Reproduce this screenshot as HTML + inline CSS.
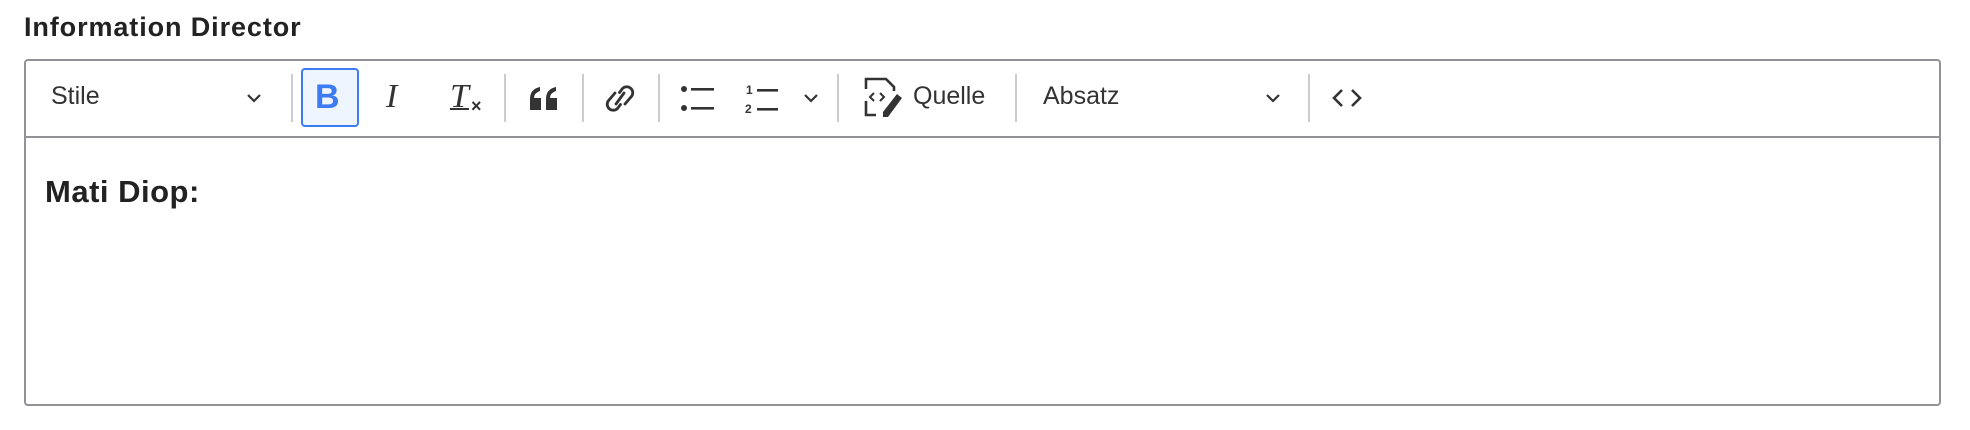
<!DOCTYPE html>
<html><head><style>
body{margin:0;width:1970px;height:430px;background:#fff;font-family:"Liberation Sans",Arial,sans-serif;color:#222;position:relative;overflow:hidden}
.a{position:absolute}
.lbl{left:24px;top:12px;font-size:27px;font-weight:bold;color:#222;letter-spacing:0.9px}
.box{left:24px;top:59px;width:1917px;height:347px;border:2px solid #919196;border-radius:4px;box-sizing:border-box}
.tb{left:24px;top:136px;width:1917px;height:2px;background:#919196}
.sep{width:2px;height:48px;top:74px;background:#ccc}
.t{font-size:25px;color:#333;top:82px;line-height:28px}
svg{position:absolute}
</style></head><body>
<div class="a lbl">Information Director</div>
<div class="a box"></div>
<div class="a tb"></div>
<div class="a t" style="left:51px">Stile</div>
<svg style="left:246px;top:92px" width="16" height="12"><path d="M2 3l6 6 6-6" fill="none" stroke="#333" stroke-width="2.2"/></svg>
<div class="a sep" style="left:291px"></div>
<div class="a" style="left:301px;top:68px;width:58px;height:59px;box-sizing:border-box;border:2px solid #3d7bf3;border-radius:4px;background:#eff5ff"></div>
<div class="a" style="left:315px;top:79px;font-size:34px;font-weight:bold;color:#3d7bf3;line-height:36px">B</div>
<div class="a" style="left:386px;top:79px;font-size:34px;font-style:italic;font-family:'Liberation Serif',serif;line-height:36px;color:#333">I</div>
<div class="a" style="left:450px;top:79px;font-size:34px;font-style:italic;font-family:'Liberation Serif',serif;line-height:36px;color:#333;text-decoration:underline;text-decoration-thickness:2px">T</div>
<div class="a" style="left:471px;top:96px;font-size:18px;font-weight:bold;color:#333">×</div>
<div class="a sep" style="left:504px"></div>
<svg style="left:528px;top:86px" width="32" height="26"><path d="M2 24V13Q2 3 12 1v4Q6 7 6 12h7v12zM18 24V13Q18 3 28 1v4Q22 7 22 12h7v12z" fill="#333"/></svg>
<div class="a sep" style="left:582px"></div>
<svg style="left:603px;top:80px" width="34" height="38"><g fill="none" stroke="#333" stroke-width="2.8" stroke-linecap="round"><path d="M12 13l-6 7a6 6 0 0 0 8.5 8.5l3-4"/><path d="M22 24l6-7a6 6 0 0 0-8.5-8.5l-3 4"/><path d="M13 24l8-11"/></g></svg>
<div class="a sep" style="left:658px"></div>
<svg style="left:680px;top:84px" width="40" height="30"><g fill="#333"><circle cx="4" cy="5" r="3"/><circle cx="4" cy="24" r="3"/><rect x="11" y="4" width="23" height="2.6"/><rect x="11" y="23" width="23" height="2.6"/></g></svg>
<svg style="left:744px;top:81px" width="44" height="34"><g fill="#333"><text x="2" y="13" font-size="12" font-weight="bold" font-family="Liberation Sans">1</text><text x="1" y="32" font-size="12" font-weight="bold" font-family="Liberation Sans">2</text><rect x="13" y="8" width="21" height="2.6"/><rect x="13" y="27" width="21" height="2.6"/></g></svg>
<svg style="left:803px;top:92px" width="16" height="12"><path d="M2 3l6 6 6-6" fill="none" stroke="#333" stroke-width="2.2"/></svg>
<div class="a sep" style="left:837px"></div>
<svg style="left:864px;top:77px" width="42" height="42"><g fill="none" stroke="#333" stroke-width="2.6"><path d="M2 12V2h20l8 8v4"/><path d="M2 24v14h10"/><path d="M10 16l-4 4 4 4M16 16l4 4-4 4" stroke-width="2"/></g><path d="M33 17l5 4-14 19h-5v-5z" fill="#333"/></svg>
<div class="a t" style="left:913px">Quelle</div>
<div class="a sep" style="left:1015px"></div>
<div class="a t" style="left:1043px">Absatz</div>
<svg style="left:1265px;top:92px" width="16" height="12"><path d="M2 3l6 6 6-6" fill="none" stroke="#333" stroke-width="2.2"/></svg>
<div class="a sep" style="left:1308px"></div>
<svg style="left:1330px;top:87px" width="34" height="22"><path d="M12 3l-8 8 8 8M22 3l8 8-8 8" fill="none" stroke="#333" stroke-width="2.6"/></svg>
<div class="a" style="left:45px;top:174px;font-size:31px;font-weight:bold;color:#222;letter-spacing:0.5px">Mati Diop:</div>
</body></html>
